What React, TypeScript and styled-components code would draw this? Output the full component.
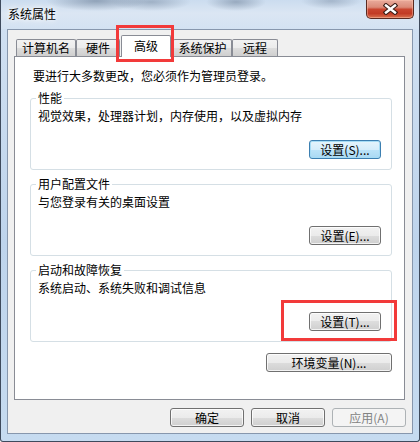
import React from "react";
import styled, { createGlobalStyle } from "styled-components";

const FONT = `"Noto Sans CJK SC", "Noto Sans", sans-serif`;

const Global = createGlobalStyle`
  html, body { margin: 0; padding: 0; background: #ffffff; }
  body { font-family: ${FONT}; font-size: 12px; color: #000; }
  * { box-sizing: border-box; }
`;

const Window = styled.div`
  position: relative;
  width: 420px;
  height: 442px;
  display: flex;
  flex-direction: column;
  border: 1px solid #3e4a5c;
  border-top: none;
  border-radius: 0 0 3px 3px;
  background: linear-gradient(180deg, #d2e1f2 0%, #bed4ec 55%, #c6dbf0 100%);
`;

const TitleBar = styled.div`
  height: 29px;
  flex: none;
  display: flex;
  justify-content: space-between;
  align-items: flex-start;
  padding: 0 5px 0 7px;
  background:
    radial-gradient(ellipse 50px 10px at 95px 1px, rgba(72, 92, 118, 0.45), transparent),
    radial-gradient(ellipse 40px 9px at 150px 2px, rgba(72, 92, 118, 0.35), transparent),
    radial-gradient(ellipse 30px 9px at 235px 2px, rgba(72, 92, 118, 0.4), transparent),
    radial-gradient(ellipse 30px 8px at 330px 1px, rgba(72, 92, 118, 0.3), transparent),
    linear-gradient(180deg, #cbdcef 0%, #dbe6f3 45%, #d3e2f2 100%);
`;

const Title = styled.div`
  margin-top: 7px;
  line-height: 14px;
  font-size: 12px;
  color: #000;
  text-shadow: 0 0 5px #fff, 0 0 8px rgba(255, 255, 255, 0.9);
`;

const CloseButton = styled.div`
  width: 48px;
  height: 19px;
  display: flex;
  align-items: center;
  justify-content: center;
  border: 1px solid #5a2a21;
  border-top: none;
  border-radius: 0 0 5px 5px;
  background: linear-gradient(
    180deg,
    #e9ab9c 0%,
    #db8a78 40%,
    #c9452f 52%,
    #c23b25 75%,
    #d9724f 100%
  );
  box-shadow: inset 0 0 0 1px rgba(255, 200, 180, 0.45);
`;

const Frame = styled.div`
  flex: 1;
  display: flex;
  padding: 0 6px 7px 6px;
`;

const Client = styled.div`
  flex: 1;
  display: flex;
  flex-direction: column;
  border: 1px solid #8797ad;
  background: #f0f0f0;
`;

const TabControl = styled.div`
  margin: 0 7px 0 6px;
  display: flex;
  flex-direction: column;
`;

const TabStrip = styled.div`
  height: 26px;
  display: flex;
  align-items: flex-end;
  padding-left: 2px;
`;

const Tab = styled.div<{ $active?: boolean; $w: number; $ml?: number }>`
  position: relative;
  width: ${(p) => p.$w}px;
  margin-left: ${(p) => p.$ml ?? 0}px;
  border: 1px solid #898c95;
  border-bottom: none;
  border-radius: 2px 2px 0 0;
  text-align: center;
  font-size: 12px;
  white-space: nowrap;
  height: ${(p) => (p.$active ? 22 : 17)}px;
  line-height: ${(p) => (p.$active ? 20 : 16)}px;
  margin-bottom: ${(p) => (p.$active ? -1 : 0)}px;
  z-index: ${(p) => (p.$active ? 2 : 1)};
  background: ${(p) =>
    p.$active
      ? "#ffffff"
      : "linear-gradient(180deg, #f2f2f2 0%, #ebebeb 50%, #dddddd 50%, #cfcfcf 100%)"};
`;

const Panel = styled.div`
  height: 344px;
  border: 1px solid #898c95;
  background: #ffffff;
  display: flex;
  flex-direction: column;
  padding: 0 12px 0 15px;
`;

const Intro = styled.div`
  margin-top: 11px;
  padding-left: 3px;
  line-height: 16px;
`;

const Group = styled.fieldset<{ $mt: number }>`
  margin: ${(p) => p.$mt}px 0 0 0;
  min-width: 0;
  padding: 0 10px 10px 7px;
  border: 1px solid #d5dfe5;
  border-radius: 3px;
  display: flex;
  flex-direction: column;
`;

const Legend = styled.legend`
  padding: 0 2px;
  margin-left: -2px;
  line-height: 14px;
  font-size: 12px;
`;

const GroupText = styled.div`
  margin-top: 3px;
  line-height: 16px;
`;

const GroupActions = styled.div`
  margin-top: 16px;
  display: flex;
  justify-content: flex-end;
`;

type Variant = "normal" | "focus" | "disabled";

const Button = styled.button<{ $w: number; $variant?: Variant }>`
  width: ${(p) => p.$w}px;
  height: 19px;
  padding: 0;
  font-family: ${FONT};
  font-size: 12px;
  line-height: 17px;
  border-radius: 3px;
  white-space: nowrap;
  border: 1px solid
    ${(p) =>
      p.$variant === "focus"
        ? "#3c7fb1"
        : p.$variant === "disabled"
        ? "#adb2b5"
        : "#707070"};
  color: ${(p) => (p.$variant === "disabled" ? "#838383" : "#000")};
  background: ${(p) =>
    p.$variant === "focus"
      ? "linear-gradient(180deg, #e5f4fc 0%, #d5edfb 50%, #bde4f9 50%, #a9d9f3 100%)"
      : p.$variant === "disabled"
      ? "#f4f4f4"
      : "linear-gradient(180deg, #f2f2f2 0%, #ebebeb 50%, #dddddd 50%, #cfcfcf 100%)"};
  box-shadow: ${(p) =>
    p.$variant === "disabled"
      ? "none"
      : p.$variant === "focus"
      ? "inset 0 0 0 1px #a6dcf5"
      : "inset 0 0 0 1px rgba(255,255,255,0.75)"};
`;

const EnvButton = styled(Button)`
  align-self: flex-end;
  margin-top: 11px;
`;

const BottomRow = styled.div`
  margin-top: 8px;
  padding-right: 6px;
  display: flex;
  justify-content: flex-end;
  gap: 7px;
`;

const Highlight = styled.div<{ $x: number; $y: number; $w: number; $h: number }>`
  position: absolute;
  left: ${(p) => p.$x}px;
  top: ${(p) => p.$y}px;
  width: ${(p) => p.$w}px;
  height: ${(p) => p.$h}px;
  border: 3px solid #f23a3a;
  pointer-events: none;
  z-index: 5;
`;

const CloseIcon = () => (
  <svg width="15" height="12" viewBox="0 0 15 12">
    <path d="M3 2.5 L12 9.5 M12 2.5 L3 9.5" stroke="#3b1d17" strokeWidth="4.6" strokeLinecap="square" />
    <path d="M3 2.5 L12 9.5 M12 2.5 L3 9.5" stroke="#ffffff" strokeWidth="2.4" strokeLinecap="square" />
  </svg>
);

export default function App() {
  return (
    <>
      <Global />
      <Window>
        <TitleBar>
          <Title>系统属性</Title>
          <CloseButton>
            <CloseIcon />
          </CloseButton>
        </TitleBar>
        <Frame>
          <Client>
            <TabControl>
              <TabStrip>
                <Tab $w={60}>计算机名</Tab>
                <Tab $w={44}>硬件</Tab>
                <Tab $w={50} $ml={1} $active>
                  高级
                </Tab>
                <Tab $w={59} $ml={2}>系统保护</Tab>
                <Tab $w={46}>远程</Tab>
              </TabStrip>
              <Panel>
                <Intro>要进行大多数更改，您必须作为管理员登录。</Intro>
                <Group $mt={7}>
                  <Legend>性能</Legend>
                  <GroupText>视觉效果，处理器计划，内存使用，以及虚拟内存</GroupText>
                  <GroupActions>
                    <Button $w={72} $variant="focus">设置(S)...</Button>
                  </GroupActions>
                </Group>
                <Group $mt={7}>
                  <Legend>用户配置文件</Legend>
                  <GroupText>与您登录有关的桌面设置</GroupText>
                  <GroupActions>
                    <Button $w={72}>设置(E)...</Button>
                  </GroupActions>
                </Group>
                <Group $mt={7}>
                  <Legend>启动和故障恢复</Legend>
                  <GroupText>系统启动、系统失败和调试信息</GroupText>
                  <GroupActions>
                    <Button $w={72}>设置(T)...</Button>
                  </GroupActions>
                </Group>
                <EnvButton $w={126}>环境变量(N)...</EnvButton>
              </Panel>
            </TabControl>
            <BottomRow>
              <Button $w={74}>确定</Button>
              <Button $w={74}>取消</Button>
              <Button $w={74} $variant="disabled">应用(A)</Button>
            </BottomRow>
          </Client>
        </Frame>
        <Highlight $x={115} $y={25} $w={58} $h={37} />
        <Highlight $x={280} $y={300} $w={116} $h={41} />
      </Window>
    </>
  );
}
